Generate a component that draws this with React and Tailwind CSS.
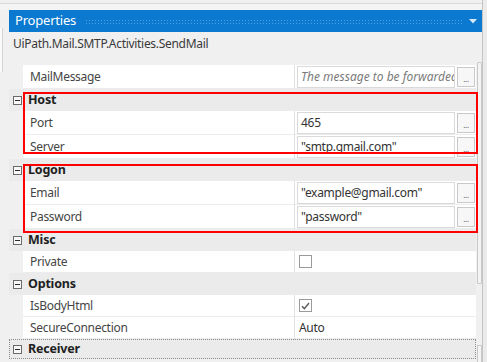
import React from "react";

function Minus() {
  return (
    <div className="w-[9px] h-[9px] border border-[#6b6b6b] bg-[#f7f7f7] flex items-center justify-center">
      <div className="w-[5px] h-px bg-[#2b2b2b]" />
    </div>
  );
}

function Category({ name, h = "h-[22px]" }) {
  return (
    <div className={`flex ${h} bg-[#ebebeb]`}>
      <div className="w-[14px] shrink-0 flex items-center pl-[4px]">
        <Minus />
      </div>
      <div className="flex-1 flex items-center pl-[5px] font-bold text-[12.5px] text-[#1e1e1e] tracking-[-0.2px]">
        {name}
      </div>
    </div>
  );
}

function Prop({ name, h = "h-[22px]", children }) {
  return (
    <div className={`flex ${h}`}>
      <div className="w-[14px] shrink-0 bg-[#f0f0f0]" />
      <div className="w-[271px] shrink-0 bg-white border-b border-[#ececec] flex items-center pl-[7px] text-[#454545]">
        {name}
      </div>
      <div className="w-px shrink-0 bg-[#e2e2e2]" />
      <div className="w-[181px] shrink-0 bg-white border-b border-[#ececec] flex items-center">
        {children}
      </div>
    </div>
  );
}

function TextVal({ children, italic }) {
  return (
    <div className="flex items-center gap-[2px] pl-[2px]">
      <div className="w-[158px] h-[22px] border border-[#dadada] bg-white flex items-center pl-[3px] overflow-hidden whitespace-nowrap">
        {italic ? (
          <span className="italic text-[#7a7a7a] tracking-[0px]">{children}</span>
        ) : (
          <span className="text-[#333]">{children}</span>
        )}
      </div>
      <div className="w-[18px] h-[20px] border border-[#c9c9c9] bg-[#f7f7f7] flex items-end justify-center pb-[3px] text-[8px] leading-none text-[#555]">
        ...
      </div>
    </div>
  );
}

function Check({ checked }) {
  return (
    <div className="ml-[4px] w-[13px] h-[13px] border border-[#9a9a9a] bg-white flex items-center justify-center">
      {checked && (
        <svg width="9" height="8" viewBox="0 0 9 8">
          <path d="M1 4.2 L3.4 6.6 L8 1" fill="none" stroke="#5a5a5a" strokeWidth="1.4" />
        </svg>
      )}
    </div>
  );
}

export default function App() {
  return (
    <div className="relative w-[487px] h-[362px] overflow-hidden bg-[#f0f0f0] flex flex-col font-['Noto_Sans',sans-serif] text-[12px] tracking-[-0.3px]">
      {/* top strip */}
      <div className="h-[10px] shrink-0 flex">
        <div className="w-[482px] mt-[3px] border-t border-[#d9d9d9] bg-[#f4f4f4]" />
        <div className="flex-1 border-l border-[#c4c4c4] bg-[#ebebeb]" />
      </div>
      <div className="flex flex-1">
        {/* left edge */}
        <div className="w-[9px] shrink-0 pt-[18px]">
          <div className="w-[3px] h-[44px] bg-[#fafafa] border-r border-[#d4d4d4]" />
        </div>
        {/* panel */}
        <div className="w-[473px] shrink-0 flex flex-col">
          <div className="h-[22px] shrink-0 bg-[#0a79cf] flex items-center">
            <span className="pl-[6px] text-white text-[13px] tracking-[-0.2px]">Properties</span>
            <div className="ml-[9px] w-[377px] h-[5px] bg-[radial-gradient(#4fa3e3_0.7px,transparent_0.9px)] bg-size-[3px_3px]" />
            <div className="flex-1 flex items-center justify-center pl-[2px]">
              <svg width="8" height="5" viewBox="0 0 8 5">
                <polygon points="0,0 8,0 4,4.5" fill="#d6e9f8" />
              </svg>
            </div>
          </div>
          <div className="flex flex-1">
            <div className="w-[467px] shrink-0 flex flex-col">
              <div className="h-[33px] shrink-0 pt-[4px] pl-[4px] leading-[16px] text-[#3a3a3a]">
                UiPath.Mail.SMTP.Activities.SendMail
              </div>
              <Prop name="MailMessage" h="h-[24px]">
                <TextVal italic>The message to be forwarded</TextVal>
              </Prop>
              <Category name="Host" />
              <Prop name="Port" h="h-[24px]">
                <TextVal>465</TextVal>
              </Prop>
              <Prop name="Server" h="h-[24px]">
                <TextVal>"smtp.gmail.com"</TextVal>
              </Prop>
              <Category name="Logon" />
              <Prop name="Email" h="h-[24px]">
                <TextVal>"example@gmail.com"</TextVal>
              </Prop>
              <Prop name="Password" h="h-[24px]">
                <TextVal>"password"</TextVal>
              </Prop>
              <Category name="Misc" />
              <Prop name="Private">
                <Check />
              </Prop>
              <Category name="Options" />
              <Prop name="IsBodyHtml">
                <Check checked />
              </Prop>
              <Prop name="SecureConnection">
                <span className="pl-[4px] text-[#333]">Auto</span>
              </Prop>
              <div className="h-[20px] flex bg-[#ebebeb] border border-dotted border-[#8c8c8c]">
                <div className="w-[13px] shrink-0 flex items-center pl-[3px]">
                  <Minus />
                </div>
                <div className="flex-1 flex items-center pl-[5px] font-bold text-[12.5px] text-[#1e1e1e] tracking-[-0.2px]">
                  Receiver
                </div>
              </div>
            </div>
            {/* scrollbar */}
            <div className="w-[6px] shrink-0 flex flex-col pt-[30px] pl-px">
              <div className="w-[5px] h-[222px] border border-[#c8c8c8] rounded-[1px] bg-[#f4f4f4]" />
              <div className="mt-[61px] w-[5px] flex-1 border-l border-t border-r border-[#c8c8c8] bg-[#f4f4f4]" />
            </div>
          </div>
        </div>
        {/* right edge */}
        <div className="flex-1 border-l border-[#c4c4c4] bg-[#ebebeb]" />
      </div>

      {/* annotation boxes */}
      <div className="absolute left-[23px] top-[92px] w-[455px] h-[62px] border-2 border-[#ff0000]" />
      <div className="absolute left-[23px] top-[164px] w-[455px] h-[69px] border-2 border-[#ff0000]" />
    </div>
  );
}
